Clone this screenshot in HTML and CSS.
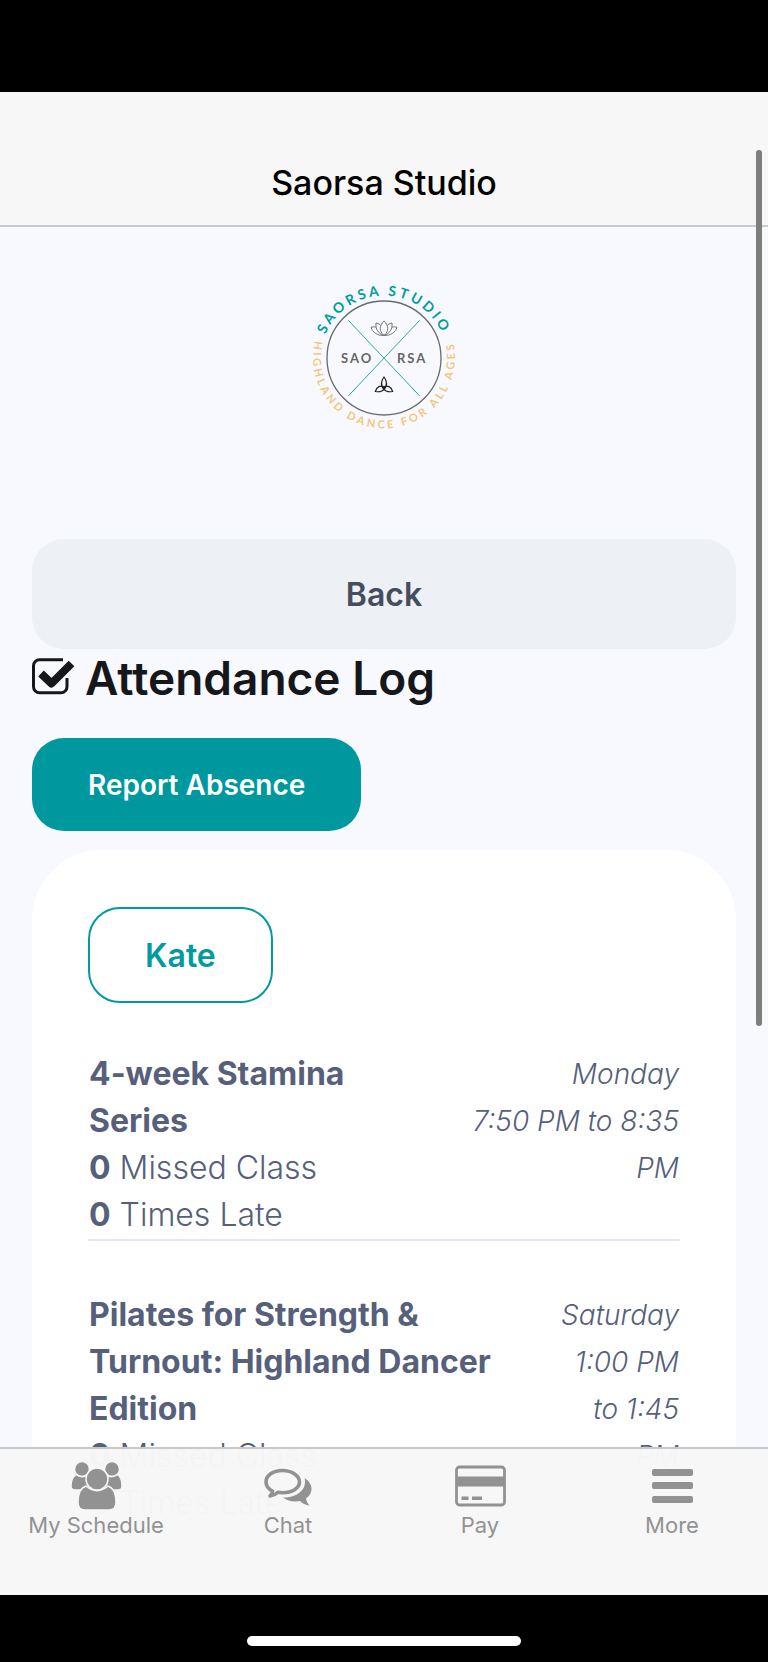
FILE: index.html
```html
<!DOCTYPE html>
<html lang="en">
<head>
  <meta charset="UTF-8">
  <meta name="viewport" content="width=device-width, initial-scale=1.0">
  <title>Saorsa Studio</title>
  <link rel="stylesheet" href="styles.css">
</head>
<body>
  <div class="app">
    <!--TITLE BAR-->
    <header class="titlebar">Saorsa Studio</header>

    <!--PAGE-->
    <main class="page">
      <svg class="logo" width="170" height="166" viewBox="0 0 170 166" role="img" aria-label="Saorsa Studio logo">
        <defs>
          <path id="arc-top" d="M24.100 102a63.500 63.500 0 1 1 121.800 0"/>
          <path id="arc-bottom" d="M19.500 55a71 71 0 1 0 131 0"/>
        </defs>
        <circle cx="85" cy="83" r="57" fill="none" stroke="#6a6a6c" stroke-width="1.300"/>
        <path d="M49.300 45.300 120.700 121M120.700 45.300 49.300 121" stroke="#2fa5aa" stroke-width="1"/>
        <text class="logo-top"><textPath href="#arc-top" startOffset="50%">SAORSA STUDIO</textPath></text>
        <text class="logo-bottom"><textPath href="#arc-bottom" startOffset="50%">HIGHLAND DANCE FOR ALL AGES</textPath></text>
        <text class="logo-mid" x="42" y="88">SAO</text>
        <text class="logo-mid" x="98" y="88">RSA</text>
        <!--lotus-->
        <g fill="none" stroke="#77777a" stroke-width="1">
          <path d="M85 46c-5 5-5 10 0 14.500c5-4.500 5-9.500 0-14.500z"/>
          <path d="M81.500 50c-2-1.500-3-1.800-4.500-2c-.6 6 2 10.500 8 12.500c6-2 8.600-6.500 8-12.500c-1.500.2-2.500.5-4.500 2"/>
          <path d="M77 52c-1.500-.2-3.500-.2-5 .2c1.500 5.300 6.500 8.600 13 8.300c6.500.3 11.500-3 13-8.300c-1.500-.4-3.500-.4-5-.2"/>
        </g>
        <!--knot-->
        <g fill="none" stroke="#222" stroke-width="1.200">
          <path d="M85 102c-3.500 4.500-3.500 8.500 0 13c3.500-4.500 3.500-8.500 0-13z"/>
          <path d="M76.300 116.500c1.500-5 5-6.500 9.500-4.500c-.5 3.500-4 5.500-9.500 4.500z"/>
          <path d="M93.700 116.500c-1.500-5-5-6.500-9.500-4.500c.5 3.500 4 5.500 9.500 4.500z"/>
        </g>
      </svg>

      <button class="btn btn-back">Back</button>

      <h1 class="heading">
        <svg class="heading-icon" width="43" height="37" viewBox="0 0 43 37" aria-hidden="true">
          <path d="M31 1.800H7.500a6 6 0 0 0-6 6v21a6 6 0 0 0 6 6H29a6 6 0 0 0 6-6V20" fill="none" stroke="#15171b" stroke-width="3"/>
          <path d="M9 15.500l10.500 10L39.500 5.500" fill="none" stroke="#15171b" stroke-width="8" stroke-linejoin="round"/>
        </svg>
        Attendance Log
      </h1>

      <button class="btn btn-report">Report Absence</button>

      <section class="card">
        <button class="btn btn-student">Kate</button>

        <div class="class-row">
          <div class="class-info">
            <strong>4-week Stamina Series</strong>
            <div><b>0</b> Missed Class</div>
            <div><b>0</b> Times Late</div>
          </div>
          <div class="class-time">
            <div>Monday</div>
            <div>7:50 PM to 8:35 PM</div>
          </div>
        </div>

        <div class="class-row">
          <div class="class-info">
            <strong>Pilates for Strength &amp; Turnout: Highland Dancer Edition</strong>
            <div><b>0</b> Missed Class</div>
            <div><b>0</b> Times Late</div>
          </div>
          <div class="class-time">
            <div>Saturday</div>
            <div>1:00 PM to 1:45 PM</div>
          </div>
        </div>
      </section>
    </main>

    <div class="scroll-thumb"></div>

    <!--TAB BAR-->
    <nav class="tabbar">
      <a class="tab" href="#schedule">
        <svg width="52" height="50" viewBox="0 0 52 50" aria-hidden="true">
          <g fill="#929292" stroke="#f7f7f7" stroke-width="1.500">
            <circle cx="12" cy="8" r="7.500"/>
            <circle cx="42" cy="8" r="7.500"/>
            <path d="M6 13.500c4 3 8 3 11.500 0l4 2v13.500H5c-2.500 0-4-1.500-4-4c0-5 1.500-9.500 5-11.500z"/>
            <path d="M47.500 13.500c-4 3-8 3-11.500 0l-4 2v13.500H48c2.500 0 4-1.500 4-4c0-5-1.500-9.500-4.500-11.500z"/>
            <path d="M16 25c7 6 15 6 22 0c6 2 8 9 8 16.500c0 5-2.500 7.500-7 7.500H15c-4.500 0-7-2.500-7-7.500c0-7.500 2-14.500 8-16.500z"/>
            <circle cx="27" cy="18" r="11"/>
          </g>
        </svg>
        My Schedule
      </a>
      <a class="tab" href="#chat">
        <svg width="52" height="50" viewBox="0 0 52 50" aria-hidden="true">
          <path d="M20.500 9.500C11 9.500 4 14.500 4 21c0 4 2.500 7 6.500 9c0 2-1 3.500-2.500 5c3.500-.5 6-1.800 8-3.700c1.500.3 3 .4 4.500.4c9.500 0 17-4.500 17-10.700S30 9.500 20.500 9.500z" fill="none" stroke="#929292" stroke-width="3.600" stroke-linejoin="round"/>
          <path d="M42.500 17c4.500 3 7 6.500 7 11c0 4-2 7-5.500 9.500c.3 2.500 1.500 4.500 3.500 7c-4-.5-7-2-9.500-4.500c-7 1.200-12.500-.3-17-3.500c10 .5 22-5 22-15.500c0-1.500 0-2.500-.5-4z" fill="#929292"/>
        </svg>
        Chat
      </a>
      <a class="tab" href="#pay">
        <svg width="52" height="50" viewBox="0 0 52 50" aria-hidden="true">
          <rect x="2.500" y="6" width="48" height="38" rx="3" fill="none" stroke="#929292" stroke-width="2.800"/>
          <path d="M2.500 15.500h48v10h-48zM7.500 35.500h7V39h-7zM18 35.500h10V39H18z" fill="#929292"/>
        </svg>
        Pay
      </a>
      <a class="tab" href="#more">
        <svg width="52" height="50" viewBox="0 0 52 50" aria-hidden="true">
          <g fill="#929292">
            <rect x="6" y="8" width="41" height="7" rx="2"/>
            <rect x="6" y="21" width="41" height="7" rx="2"/>
            <rect x="6" y="35" width="41" height="7" rx="2"/>
          </g>
        </svg>
        More
      </a>
    </nav>
  </div>

  <div class="home-indicator"></div>
</body>
</html>
```

FILE: styles.css
```css
* {
  margin: 0;
  padding: 0;
  box-sizing: border-box;
}

body {
  display: flex;
  flex-direction: column;
  height: 100vh;
  padding-top: 92px;
  background-color: #000;
  font-family: Inter, "Liberation Sans", sans-serif;
  overflow: hidden;
}

.app {
  position: relative;
  flex: 1;
  min-height: 0;
  overflow: hidden;
  background-color: #f8f9fe;
}

.titlebar {
  height: 135px;
  padding-top: 70px;
  border-bottom: 2px solid #c8cbce;
  background-color: #f7f7f7;
  color: #000;
  font-size: 34px;
  font-weight: 500;
  line-height: 42px;
  text-align: center;
}

.page {
  padding: 48px 32px 0;
}

.logo {
  display: block;
  margin: 0 auto 98px;
}

.logo text {
  font-family: Lato, sans-serif;
  font-weight: 700;
}

.logo-top {
  fill: #009ca2;
  font-size: 14px;
  letter-spacing: 3px;
  text-anchor: middle;
}

.logo-bottom {
  fill: #f2c67c;
  font-size: 11px;
  letter-spacing: 3px;
  text-anchor: middle;
}

.logo-mid {
  fill: #666;
  font-size: 13px;
  letter-spacing: 2px;
}

.btn {
  display: block;
  border: none;
  border-radius: 32px;
  font-family: inherit;
  font-weight: 600;
  cursor: pointer;
}

.btn-back {
  width: 100%;
  height: 110px;
  background-color: #edf0f5;
  color: #444c5e;
  font-size: 32px;
}

.btn-report {
  height: 93px;
  margin-bottom: 19px;
  padding: 0 56px;
  background-color: #00989f;
  color: #fff;
  font-size: 28px;
}

.btn-student {
  height: 96px;
  margin-bottom: 47px;
  padding: 0 55px;
  border: 2px solid #009aa0;
  background-color: #fff;
  color: #009aa0;
  font-size: 32px;
}

.heading {
  display: flex;
  align-items: center;
  gap: 10px;
  margin-bottom: 30px;
  color: #15171b;
  font-size: 46px;
  font-weight: 600;
  line-height: 59px;
}

.heading-icon {
  margin-bottom: 4px;
}

.card {
  padding: 57px 56px;
  border-radius: 70px 70px 0 0;
  background-color: #fff;
}

.class-row {
  display: flex;
  justify-content: space-between;
  margin-bottom: 50px;
  padding: 0 1px 1px;
  border-bottom: 2px solid #e4e8f0;
  color: #56607a;
  font-size: 32px;
  line-height: 47px;
}

.class-info {
  font-weight: 300;
}

.class-info strong,
.class-info b {
  font-weight: 700;
}

.class-time {
  padding-top: 1px;
  font-size: 28px;
  font-style: italic;
  font-weight: 300;
  text-align: right;
}

/* scroll position, drawn over the page */
.scroll-thumb {
  position: absolute;
  top: 58px;
  right: 6px;
  width: 6px;
  height: 876px;
  border-radius: 3px;
  background-color: #7d7d7d;
}

.tabbar {
  position: absolute;
  bottom: 0;
  left: 0;
  right: 0;
  display: flex;
  height: 148px;
  padding-top: 12px;
  border-top: 2px solid #c9c9cb;
  background-color: rgba(247, 247, 247, 0.98);
}

.tab {
  display: flex;
  flex: 1;
  flex-direction: column;
  align-items: center;
  color: #929292;
  font-size: 22px;
  line-height: 28px;
  text-decoration: none;
}

.home-indicator {
  width: 274px;
  height: 10px;
  margin: 41px auto 16px;
  border-radius: 5px;
  background-color: #fff;
}
```
